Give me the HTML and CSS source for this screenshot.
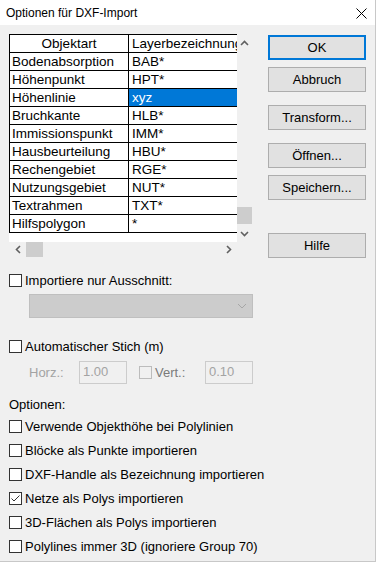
FILE: index.html
```html
<!DOCTYPE html>
<html lang="de">
<head>
<meta charset="utf-8">
<title>Optionen für DXF-Import</title>
<link rel="stylesheet" href="styles.css">
</head>
<body>
<div class="window">
  <div class="titlebar">
    <span class="title">Optionen für DXF-Import</span>
    <svg class="close" width="11" height="11" viewBox="0 0 11 11"><path d="M0.5 0.5 L10.5 10.5 M10.5 0.5 L0.5 10.5" stroke="#000" stroke-width="1" fill="none"/></svg>
  </div>
  <div class="client">
    <div class="left">
      <div class="listview">
        <div class="lv-content">
          <div class="grid">
            <div class="row head"><div class="c1">Objektart</div><div class="c2">Layerbezeichnung</div></div>
            <div class="row"><div class="c1">Bodenabsorption</div><div class="c2">BAB*</div></div>
            <div class="row"><div class="c1">Höhenpunkt</div><div class="c2">HPT*</div></div>
            <div class="row"><div class="c1">Höhenlinie</div><div class="c2 sel">xyz</div></div>
            <div class="row"><div class="c1">Bruchkante</div><div class="c2">HLB*</div></div>
            <div class="row"><div class="c1">Immissionspunkt</div><div class="c2">IMM*</div></div>
            <div class="row"><div class="c1">Hausbeurteilung</div><div class="c2">HBU*</div></div>
            <div class="row"><div class="c1">Rechengebiet</div><div class="c2">RGE*</div></div>
            <div class="row"><div class="c1">Nutzungsgebiet</div><div class="c2">NUT*</div></div>
            <div class="row"><div class="c1">Textrahmen</div><div class="c2">TXT*</div></div>
            <div class="row"><div class="c1">Hilfspolygon</div><div class="c2">*</div></div>
          </div>
        </div>
        <div class="vscroll">
          <div class="sb-btn-v"><svg width="9" height="6" viewBox="0 0 9 6"><polyline points="1,5 4.5,1.5 8,5" fill="none" stroke="#606060" stroke-width="1.6"/></svg></div>
          <div class="spacer"></div>
          <div class="thumb-v"></div>
          <div class="sb-btn-v"><svg width="9" height="6" viewBox="0 0 9 6"><polyline points="1,1 4.5,4.5 8,1" fill="none" stroke="#606060" stroke-width="1.6"/></svg></div>
        </div>
        <div class="hscroll">
          <div class="sb-btn-h"><svg width="6" height="9" viewBox="0 0 6 9"><polyline points="5,1 1.5,4.5 5,8" fill="none" stroke="#606060" stroke-width="1.6"/></svg></div>
          <div class="thumb-h"></div>
          <div class="spacer"></div>
          <div class="sb-btn-h"><svg width="6" height="9" viewBox="0 0 6 9"><polyline points="1,1 4.5,4.5 1,8" fill="none" stroke="#606060" stroke-width="1.6"/></svg></div>
        </div>
        <div class="corner"></div>
      </div>

      <div class="chk chk-first"><span class="box"></span><span class="lbl">Importiere nur Ausschnitt:</span></div>
      <div class="combo"><svg width="10" height="6" viewBox="0 0 10 6"><polyline points="1,1 5,5 9,1" fill="none" stroke="#a6a6a6" stroke-width="1"/></svg></div>

      <div class="chk chk-stich"><span class="box"></span><span class="lbl">Automatischer Stich (m)</span></div>
      <div class="stich-row">
        <span class="dis-lbl horz">Horz.:</span>
        <span class="dis-edit">1.00</span>
        <span class="box box-dis"></span>
        <span class="dis-lbl vert">Vert.:</span>
        <span class="dis-edit">0.10</span>
      </div>

      <div class="opt-title">Optionen:</div>
      <div class="opts">
        <div class="chk"><span class="box"></span><span class="lbl">Verwende Objekthöhe bei Polylinien</span></div>
        <div class="chk"><span class="box"></span><span class="lbl">Blöcke als Punkte importieren</span></div>
        <div class="chk"><span class="box"></span><span class="lbl">DXF-Handle als Bezeichnung importieren</span></div>
        <div class="chk"><span class="box checked"><svg width="11" height="11" viewBox="0 0 11 11"><polyline points="1.5,5.5 4,8 9.5,2.5" fill="none" stroke="#333" stroke-width="1"/></svg></span><span class="lbl">Netze als Polys importieren</span></div>
        <div class="chk"><span class="box"></span><span class="lbl">3D-Flächen als Polys importieren</span></div>
        <div class="chk"><span class="box"></span><span class="lbl">Polylines immer 3D (ignoriere Group 70)</span></div>
      </div>
    </div>

    <div class="buttons">
      <button class="btn btn-default">OK</button>
      <button class="btn gap-s">Abbruch</button>
      <button class="btn gap-m">Transform...</button>
      <button class="btn gap-m">Öffnen...</button>
      <button class="btn gap-s">Speichern...</button>
      <button class="btn gap-l">Hilfe</button>
    </div>
  </div>
</div>
</body>
</html>
```
FILE: styles.css
```css
* { box-sizing: border-box; }

body {
  margin: 0;
  background: #ffffff;
  font-family: "Liberation Sans", Arial, sans-serif;
  font-size: 13px;
  color: #000;
}

.window {
  width: 376px;
  height: 562px;
  background: #f0f0f0;
  border-right: 1px solid #c8c8c8;
  border-bottom: 1px solid #c8c8c8;
  display: flex;
  flex-direction: column;
}

.titlebar {
  flex: none;
  height: 25px;
  background: #ffffff;
  display: flex;
  align-items: center;
  justify-content: space-between;
  padding: 0 8px 0 6px;
}

.title {
  font-size: 12px;
  line-height: 15px;
  padding-top: 1px;
}

.close { display: block; margin-top: 1px; }

.client {
  display: flex;
  padding: 9px 0 0 9px;
}

.left {
  width: 244px;
  display: flex;
  flex-direction: column;
}

/* list view */
.listview {
  display: grid;
  grid-template-columns: 228px 16px;
  grid-template-rows: 208px 16px;
}

.lv-content {
  background: #ffffff;
  overflow: hidden;
}

.grid {
  width: 262px;
  border-top: 1px solid #000;
  border-left: 1px solid #000;
}

.row {
  display: flex;
  height: 18px;
  border-bottom: 1px solid #000;
  font-size: 13.5px;
  line-height: 17px;
  white-space: nowrap;
}

.c1 {
  width: 119px;
  flex: none;
  border-right: 1px solid #000;
  padding-left: 2px;
  overflow: hidden;
}

.c2 {
  width: 142px;
  flex: none;
  padding-left: 3px;
  border-right: 1px solid #000;
  overflow: hidden;
}

.head .c1 { text-align: center; padding-left: 0; }

.sel {
  background: #0078d7;
  color: #ffffff;
}

.vscroll {
  display: flex;
  flex-direction: column;
  background: #f0f0f0;
}

.sb-btn-v {
  height: 17px;
  display: flex;
  align-items: center;
  justify-content: center;
  padding-right: 1px;
}

.spacer { flex: 1; }

.thumb-v {
  width: 15px;
  height: 17px;
  background: #cdcdcd;
  margin-bottom: 1px;
}

.hscroll {
  display: flex;
  background: #f0f0f0;
}

.sb-btn-h {
  width: 17px;
  display: flex;
  align-items: center;
  justify-content: center;
  padding-bottom: 1px;
}

.thumb-h {
  width: 17px;
  height: 15px;
  background: #cdcdcd;
}

.corner { background: #f0f0f0; }

/* checkboxes */
.chk {
  display: flex;
  align-items: center;
  height: 13px;
}

.box {
  width: 13px;
  height: 13px;
  flex: none;
  border: 1px solid #333333;
  background: #ffffff;
  margin-right: 3px;
  display: flex;
  align-items: center;
  justify-content: center;
}

.box svg { display: block; }

.lbl {
  line-height: 15px;
  white-space: nowrap;
}

.chk-first { margin-top: 16px; }

.combo {
  margin: 7px 0 0 20px;
  width: 224px;
  height: 24px;
  background: #cccccc;
  border: 1px solid #bfbfbf;
  display: flex;
  align-items: center;
  justify-content: flex-end;
  padding-right: 5px;
}

.chk-stich { margin-top: 22px; }

.stich-row {
  margin-top: 8px;
  padding-left: 20px;
  height: 23px;
  display: flex;
  align-items: center;
}

.dis-lbl {
  line-height: 15px;
  width: 50px;
  flex: none;
}

.horz { color: #a3a3a3; }
.vert { color: #7a7a7a; }

.dis-edit {
  width: 48px;
  height: 23px;
  flex: none;
  border: 1px solid #cccccc;
  background: #f0f0f0;
  color: #a3a3a3;
  padding-left: 3px;
  line-height: 20px;
}

.box-dis {
  margin-left: 12px;
  border-color: #bcbcbc;
  background: #f0f0f0;
}

.opt-title {
  margin-top: 13px;
  line-height: 15px;
}

.opts {
  margin-top: 8px;
  display: flex;
  flex-direction: column;
  gap: 11px;
}

/* buttons */
.buttons {
  margin-left: 15px;
  width: 98px;
  display: flex;
  flex-direction: column;
  padding-top: 1px;
}

.btn {
  height: 25px;
  width: 98px;
  background: #e1e1e1;
  border: 1px solid #adadad;
  font-family: "Liberation Sans", Arial, sans-serif;
  font-size: 13px;
  color: #000;
  padding: 0;
  margin: 0;
}

.btn-default { border: 2px solid #0078d7; }
.gap-s { margin-top: 7px; }
.gap-m { margin-top: 13px; }
.gap-l { margin-top: 33px; }
```
